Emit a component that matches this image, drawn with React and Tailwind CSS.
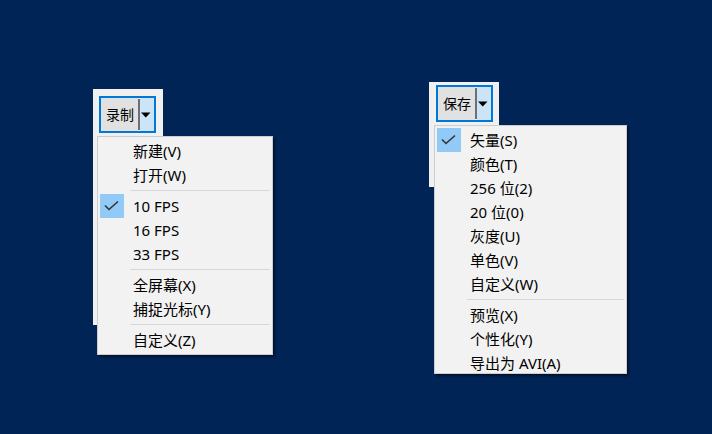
import React from "react";

const FONT = { fontFamily: '"Noto Sans", "Noto Sans CJK SC", sans-serif' };

const LEFT_ITEMS = [
  { label: "新建(V)" },
  { label: "打开(W)" },
  { sep: true },
  { label: "10 FPS", checked: true },
  { label: "16 FPS" },
  { label: "33 FPS" },
  { sep: true },
  { label: "全屏幕(X)" },
  { label: "捕捉光标(Y)" },
  { sep: true },
  { label: "自定义(Z)" },
];

const RIGHT_ITEMS = [
  { label: "矢量(S)", checked: true },
  { label: "颜色(T)" },
  { label: "256 位(2)" },
  { label: "20 位(0)" },
  { label: "灰度(U)" },
  { label: "单色(V)" },
  { label: "自定义(W)" },
  { sep: true },
  { label: "预览(X)" },
  { label: "个性化(Y)" },
  { label: "导出为 AVI(A)" },
];

const Check = () => (
  <svg width="24" height="24" viewBox="0 0 24 24">
    <polyline points="5,11.5 9,15.5 18,7.5" fill="none" stroke="#333" strokeWidth="1.6" />
  </svg>
);

// split button: text part | grey bar | arrow part
const DropButton = ({ label }) => (
  <div className="flex w-[57px] h-[37px] border-2 border-[#0078d7]">
    <div className="w-[37px] bg-[#e1e1e1] flex items-center justify-center pl-[1px] text-[14px] text-black">{label}</div>
    <div className="w-[2px] my-[1px] bg-[#6f6f6f]" />
    <div className="flex-1 bg-[#cce4f7] flex items-center pl-[1px]">
      <svg width="10" height="6" viewBox="0 0 10 6">
        <polygon points="0,0.5 9.5,0.5 4.75,5.5" fill="#000" />
      </svg>
    </div>
  </div>
);

const Menu = ({ items, className }) => (
  <div className={`absolute bg-[#f2f2f2] border border-[#cccccc] py-[2px] shadow-[2px_2px_2px_rgba(0,0,0,0.45)] ${className}`}>
    {items.map((it, i) =>
      it.sep ? (
        <div key={i} className="h-[7px] pt-[3px] pl-[32px] pr-[2px]">
          <div className="h-px bg-[#d7d7d7]" />
        </div>
      ) : (
        <div key={i} className="h-6 flex items-center">
          <div className={`ml-[2px] w-6 h-6 ${it.checked ? "bg-[#91c9f7]" : ""}`}>{it.checked && <Check />}</div>
          <span className="pl-[9px] text-[15px] leading-6 text-black whitespace-nowrap">{it.label}</span>
        </div>
      )
    )}
  </div>
);

export default function App() {
  return (
    <div className="relative w-[712px] h-[434px] overflow-hidden bg-[#012456]" style={FONT}>
      {/* left window */}
      <div className="absolute left-[93px] top-[89px] w-[70px] h-[236px] bg-[#f0f0f0] pl-[6px] pt-[7px]">
        <DropButton label="录制" />
      </div>
      <Menu items={LEFT_ITEMS} className="left-[97px] top-[136px] w-[176px]" />

      {/* right window */}
      <div className="absolute left-[429px] top-[82px] w-[70px] h-[105px] bg-[#f0f0f0] pl-[7px] pt-[3px]">
        <DropButton label="保存" />
      </div>
      <Menu items={RIGHT_ITEMS} className="left-[434px] top-[125px] w-[193px] h-[249px] overflow-hidden" />
    </div>
  );
}
